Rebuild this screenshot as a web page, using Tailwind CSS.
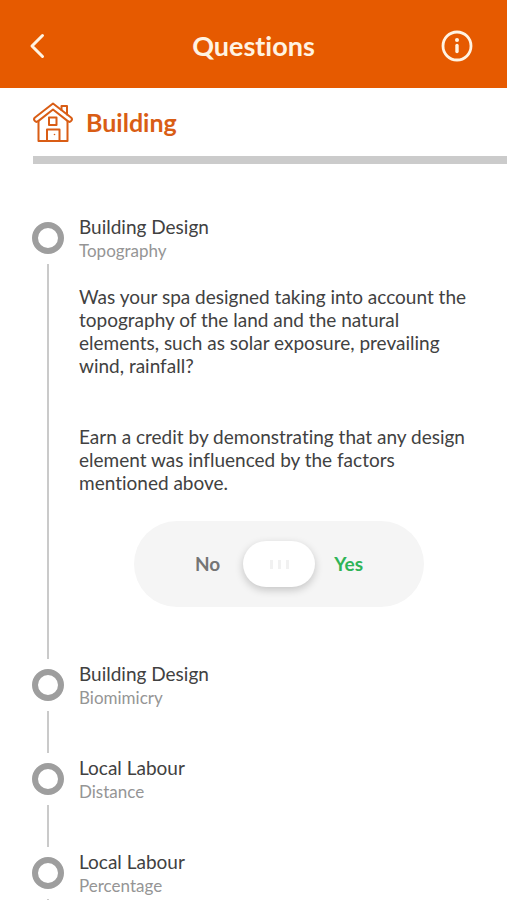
<!DOCTYPE html>
<html lang="en">
<head>
<meta charset="utf-8">
<meta name="viewport" content="width=device-width, initial-scale=1">
<title>Questions</title>
<script src="https://cdn.jsdelivr.net/npm/@tailwindcss/browser@4"></script>
</head>
<body class="min-h-screen overflow-x-hidden bg-white font-['Lato','Open_Sans',sans-serif] text-[#414141] [font-variant-ligatures:none]">
<header class="grid h-[88px] grid-cols-[1fr_auto_1fr] items-center bg-[#e65a00] px-7 pt-1 text-[#fff3e2]">
  <button type="button" aria-label="Back" class="flex h-8 w-5 items-center justify-center">
    <svg class="h-7 w-5" viewBox="0 0 20 28" fill="none" stroke="currentColor" stroke-width="3" stroke-linecap="round" stroke-linejoin="round" aria-hidden="true"><path d="M14.5 3.500 4 14l10.500 10.500"/></svg>
  </button>
  <h1 class="text-[27px] leading-8 font-bold">Questions</h1>
  <button type="button" aria-label="Information" class="justify-self-end pr-1.5">
    <svg class="size-8" viewBox="0 0 32 32" fill="none" stroke="currentColor" aria-hidden="true"><circle cx="16" cy="16" r="14" stroke-width="2.800"/><path d="M16 15.500v6" stroke-width="3.400" stroke-linecap="round"/><circle cx="16" cy="10" r="2" fill="currentColor" stroke="none"/></svg>
  </button>
</header>
<main>
  <div class="flex items-center gap-[13px] py-3.5 pl-[33px] text-[#d95d15]">
    <svg class="size-10 shrink-0" viewBox="0 0 40 40" fill="none" stroke="currentColor" stroke-width="2" stroke-linejoin="round" stroke-linecap="round" aria-hidden="true">
      <path d="M20 1.500 2 15.500a2.400 2.400 0 0 0 3.200 3.600L20 7.500l14.800 11.600a2.400 2.400 0 0 0 3.200-3.600Z"/>
      <path d="M28.500 8V4h5.500v8.500M5.500 19.500V39h29V19.500"/>
      <path d="M16 15.500h7.500v7.500H16ZM14 39V27.500h12.500V39"/>
      <circle cx="21.500" cy="32.500" r=".8" fill="currentColor" stroke="none"/>
    </svg>
    <h2 class="text-[25px] leading-10 font-bold">Building</h2>
  </div>
  <div class="ml-[33px] h-2 bg-[#cbcbcb]"></div>

  <ol class="pt-[51px] pr-7 pl-8">
    <li class="flex gap-[15px]">
      <div class="flex w-8 shrink-0 flex-col items-center gap-2.5 pt-[7px] pb-[3px]">
        <span class="size-8 rounded-full border-[6px] border-[#9e9e9e]"></span>
        <span class="w-0.5 flex-1 bg-[#cacaca]"></span>
      </div>
      <div class="min-w-0 flex-1 pb-[55px]">
        <h3 class="text-[19px] leading-6">Building Design</h3>
        <p class="text-[17px] leading-6 text-[#959595]">Topography</p>
        <p class="mt-[22px] text-[19px] leading-[23px]">Was your spa designed taking into account the topography of the land and the natural elements, such as solar exposure, prevailing wind, rainfall?</p>
        <p class="mt-12 text-[19px] leading-[23px]">Earn a credit by demonstrating that any design element was influenced by the factors mentioned above.</p>
        <div class="relative mx-auto mt-[27px] flex h-[86px] w-[290px] items-center justify-between rounded-full bg-[#f5f5f5] px-[61px] text-[19px] font-bold">
          <label for="answer" class="text-[#757575]">No</label>
          <label for="answer" class="text-[#2fb457]">Yes</label>
          <input id="answer" type="range" min="0" max="2" value="1" class="absolute inset-0 h-full w-full appearance-none rounded-full bg-transparent [&::-webkit-slider-thumb]:h-[46px] [&::-webkit-slider-thumb]:w-[72px] [&::-webkit-slider-thumb]:appearance-none [&::-webkit-slider-thumb]:rounded-full [&::-webkit-slider-thumb]:bg-white [&::-webkit-slider-thumb]:bg-[linear-gradient(90deg,#f1f1f1_3px,transparent_3px,transparent_8px,#f1f1f1_8px,#f1f1f1_11px,transparent_11px,transparent_16px,#f1f1f1_16px)] [&::-webkit-slider-thumb]:bg-[length:19px_9px] [&::-webkit-slider-thumb]:bg-center [&::-webkit-slider-thumb]:bg-no-repeat [&::-webkit-slider-thumb]:shadow-[0_3px_8px_rgba(0,0,0,0.2)]">
        </div>
      </div>
    </li>
    <li class="flex h-[94px] gap-[15px]">
      <div class="flex w-8 shrink-0 flex-col items-center gap-2.5 pt-[7px] pb-[3px]">
        <span class="size-8 rounded-full border-[6px] border-[#9e9e9e]"></span>
        <span class="w-0.5 flex-1 bg-[#cacaca]"></span>
      </div>
      <div>
        <h3 class="text-[19px] leading-6">Building Design</h3>
        <p class="text-[17px] leading-6 text-[#959595]">Biomimicry</p>
      </div>
    </li>
    <li class="flex h-[94px] gap-[15px]">
      <div class="flex w-8 shrink-0 flex-col items-center gap-2.5 pt-[7px] pb-[3px]">
        <span class="size-8 rounded-full border-[6px] border-[#9e9e9e]"></span>
        <span class="w-0.5 flex-1 bg-[#cacaca]"></span>
      </div>
      <div>
        <h3 class="text-[19px] leading-6">Local Labour</h3>
        <p class="text-[17px] leading-6 text-[#959595]">Distance</p>
      </div>
    </li>
    <li class="flex h-[94px] gap-[15px]">
      <div class="flex w-8 shrink-0 flex-col items-center gap-2.5 pt-[7px] pb-[3px]">
        <span class="size-8 rounded-full border-[6px] border-[#9e9e9e]"></span>
        <span class="w-0.5 flex-1 bg-[#cacaca]"></span>
      </div>
      <div>
        <h3 class="text-[19px] leading-6">Local Labour</h3>
        <p class="text-[17px] leading-6 text-[#959595]">Percentage</p>
      </div>
    </li>
  </ol>
</main>
</body>
</html>
